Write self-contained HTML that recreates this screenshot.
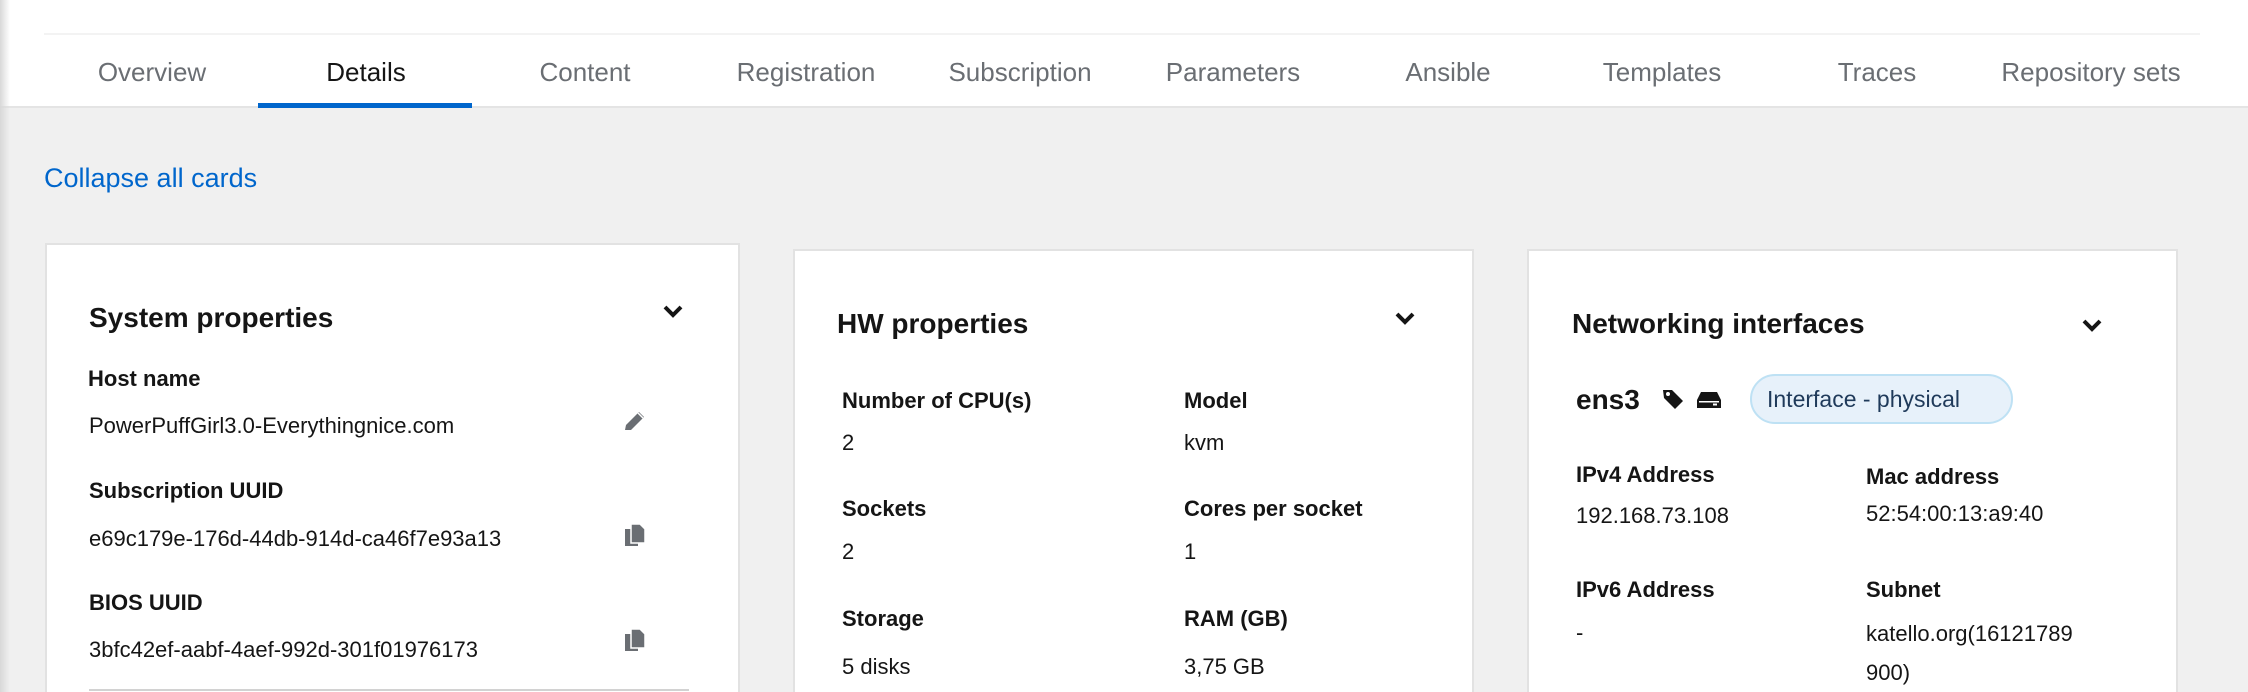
<!DOCTYPE html>
<html style="width:2248px;height:692px;overflow:hidden"><head><meta charset="utf-8"><style>
*{margin:0;padding:0;box-sizing:border-box}
html,body{width:2248px;height:692px;overflow:hidden}
body{background:#f0f0f0;font-family:"Liberation Sans",sans-serif;color:#151515;position:relative}
.a{position:absolute;white-space:nowrap}
.top{position:absolute;left:0;top:0;width:2248px;height:108px;background:#fff;border-bottom:2px solid #e4e4e4}
.tab{position:absolute;top:57px;font-size:26px;color:#6a6e73;transform:translateX(-50%);white-space:nowrap}
.card{position:absolute;background:#fff;border:2px solid #e2e2e2;border-bottom:none;bottom:0}
.t{font-size:28px;font-weight:bold;color:#151515}
.l{font-size:22px;font-weight:bold;color:#151515}
.v{font-size:22px;color:#151515}
.shadow{position:absolute;left:0;top:0;width:10px;height:692px;background:linear-gradient(to right,#d8d8d8,rgba(240,240,240,0))}
</style></head><body>
<div class="top"></div>
<div class="a" style="left:44px;top:33px;width:2156px;height:2px;background:#f3f3f3"></div>
<div class="shadow"></div>
<div class="tab" style="left:152px">Overview</div>
<div class="tab" style="left:366px;color:#151515">Details</div>
<div class="tab" style="left:585px">Content</div>
<div class="tab" style="left:806px">Registration</div>
<div class="tab" style="left:1020px">Subscription</div>
<div class="tab" style="left:1233px">Parameters</div>
<div class="tab" style="left:1448px">Ansible</div>
<div class="tab" style="left:1662px">Templates</div>
<div class="tab" style="left:1877px">Traces</div>
<div class="tab" style="left:2091px">Repository sets</div>
<div class="a" style="left:258px;top:103px;width:214px;height:5px;background:#0066cc"></div>
<div class="a" style="left:44px;top:163px;font-size:27px;color:#0066cc">Collapse all cards</div>

<div class="card" style="left:45px;top:243px;width:695px"></div>
<div class="card" style="left:793px;top:249px;width:681px"></div>
<div class="card" style="left:1527px;top:249px;width:651px"></div>

<svg class="a" style="left:663px;top:303px" width="20" height="16" viewBox="0 0 20 16"><path d="M2 4l8 8 8-8" fill="none" stroke="#151515" stroke-width="4"/></svg>
<svg class="a" style="left:1395px;top:310px" width="20" height="16" viewBox="0 0 20 16"><path d="M2 4l8 8 8-8" fill="none" stroke="#151515" stroke-width="4"/></svg>
<svg class="a" style="left:2082px;top:317px" width="20" height="16" viewBox="0 0 20 16"><path d="M2 4l8 8 8-8" fill="none" stroke="#151515" stroke-width="4"/></svg>

<div class="a t" style="left:89px;top:302px">System properties</div>
<div class="a l" style="left:88px;top:366px">Host name</div>
<div class="a v" style="left:89px;top:413px">PowerPuffGirl3.0-Everythingnice.com</div>
<svg class="a" style="left:622px;top:409px" width="25" height="24" viewBox="0 0 25 24"><path d="M4 16L17 3l5 5L9 21H3z" fill="#6a6e73"/><path d="M16 4l5 5" stroke="#fff" stroke-width="1.5"/></svg>
<div class="a l" style="left:89px;top:478px">Subscription UUID</div>
<div class="a v" style="left:89px;top:526px">e69c179e-176d-44db-914d-ca46f7e93a13</div>
<svg class="a" style="left:623px;top:523px" width="24" height="24" viewBox="0 0 24 24"><rect x="2" y="6" width="13" height="17" fill="#6a6e73"/><path d="M8 1h9l5 5v14H8z" fill="#6a6e73" stroke="#fff" stroke-width="1.5"/></svg>
<div class="a l" style="left:89px;top:590px">BIOS UUID</div>
<div class="a v" style="left:89px;top:637px">3bfc42ef-aabf-4aef-992d-301f01976173</div>
<svg class="a" style="left:623px;top:628px" width="24" height="24" viewBox="0 0 24 24"><rect x="2" y="6" width="13" height="17" fill="#6a6e73"/><path d="M8 1h9l5 5v14H8z" fill="#6a6e73" stroke="#fff" stroke-width="1.5"/></svg>
<div class="a" style="left:89px;top:689px;width:600px;height:2px;background:#d2d2d2"></div>

<div class="a t" style="left:837px;top:308px">HW properties</div>
<div class="a l" style="left:842px;top:388px">Number of CPU(s)</div>
<div class="a v" style="left:842px;top:430px">2</div>
<div class="a l" style="left:842px;top:496px">Sockets</div>
<div class="a v" style="left:842px;top:539px">2</div>
<div class="a l" style="left:842px;top:606px">Storage</div>
<div class="a v" style="left:842px;top:654px">5 disks</div>
<div class="a l" style="left:1184px;top:388px">Model</div>
<div class="a v" style="left:1184px;top:430px">kvm</div>
<div class="a l" style="left:1184px;top:496px">Cores per socket</div>
<div class="a v" style="left:1184px;top:539px">1</div>
<div class="a l" style="left:1184px;top:606px">RAM (GB)</div>
<div class="a v" style="left:1184px;top:654px">3,75 GB</div>

<div class="a t" style="left:1572px;top:308px">Networking interfaces</div>
<div class="a" style="left:1576px;top:384px;font-size:28px;font-weight:bold">ens3</div>
<svg class="a" style="left:1662px;top:388px" width="22" height="22" viewBox="0 0 22 22"><path d="M1 2h9l11 11-8 8L2 10z" fill="#151515"/><circle cx="6" cy="6" r="2" fill="#fff"/></svg>
<svg class="a" style="left:1696px;top:391px" width="26" height="18" viewBox="0 0 26 18"><path d="M5 1h16l4 8v8H1V9z" fill="#151515"/><rect x="3" y="10" width="20" height="1.5" fill="#fff"/><rect x="17" y="12.5" width="4" height="2" fill="#fff"/></svg>
<div class="a" style="left:1750px;top:374px;width:263px;height:50px;border-radius:25px;background:#e7f1fa;border:2px solid #bee1f4"></div>
<div class="a" style="left:1767px;top:386px;font-size:23px;color:#1f3a5a">Interface - physical</div>
<div class="a l" style="left:1576px;top:462px">IPv4 Address</div>
<div class="a v" style="left:1576px;top:503px">192.168.73.108</div>
<div class="a l" style="left:1866px;top:464px">Mac address</div>
<div class="a v" style="left:1866px;top:501px">52:54:00:13:a9:40</div>
<div class="a l" style="left:1576px;top:577px">IPv6 Address</div>
<div class="a v" style="left:1576px;top:620px">-</div>
<div class="a l" style="left:1866px;top:577px">Subnet</div>
<div class="a v" style="left:1866px;top:621px">katello.org(16121789</div>
<div class="a v" style="left:1866px;top:660px">900)</div>
</body></html>
